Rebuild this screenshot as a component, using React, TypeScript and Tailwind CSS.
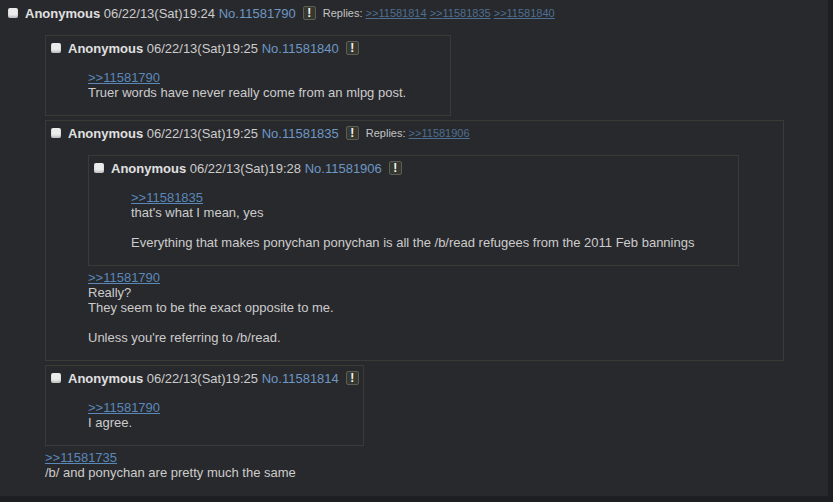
import React from 'react';

type PostHeadProps = {
  time: string;
  no: string;
  replies?: string[];
};

const PostHead: React.FC<PostHeadProps> = ({ time, no, replies }) => (
  <div className="flex items-center h-[18px] whitespace-nowrap">
    <span className="inline-block w-[10px] h-[10px] rounded-[2px] bg-[#ececec] shadow-[inset_0_-2px_2px_rgba(0,0,0,0.18)] mr-[7px] shrink-0" />
    <span className="text-[#cccccc]">
      <b className="text-[#e0e0e0]">Anonymous</b> {time}{' '}
      <span className="text-[#6d97c4]">No.{no}</span>
    </span>
    <span className="ml-[7px] inline-flex items-center justify-center w-[13px] h-[14px] border border-[#5c5d53] bg-[#36372f] rounded-[2px] text-[#f4f4f4] font-bold text-[12px] leading-none">
      !
    </span>
    {replies && (
      <span className="ml-[7px] text-[11px] text-[#c4c4c4]">
        Replies:
        {replies.map((r) => (
          <React.Fragment key={r}>
            {' '}
            <span className="underline text-[#4e6f91]">&gt;&gt;{r}</span>
          </React.Fragment>
        ))}
      </span>
    )}
  </div>
);

const Quote: React.FC<{ to: string }> = ({ to }) => (
  <div className="underline text-[#5a88b9]">&gt;&gt;{to}</div>
);

const Reply: React.FC<PostHeadProps & { children: React.ReactNode }> = ({ children, ...head }) => (
  <div className="w-fit border border-[#3a3b37] bg-[#28292d] pt-[3px] pb-[2px] pl-[5px] pr-1 mb-1">
    <PostHead {...head} />
    <div className="ml-[37px] mr-10 mt-[13px] mb-[13px]">{children}</div>
  </div>
);

export default function App() {
  return (
    <div
      className="w-[833px] h-[502px] bg-[#1e1f22] overflow-hidden text-[13px] leading-[15px] text-[#cccccc]"
      style={{ fontFamily: '"Liberation Sans", Arial, Helvetica, sans-serif' }}
    >
      <div className="w-[828px] bg-[#28292d] pt-1 pb-[3px] pl-2">
        <PostHead
          time="06/22/13(Sat)19:24"
          no="11581790"
          replies={['11581814', '11581835', '11581840']}
        />
        <div className="ml-[37px] mr-10 mt-[13px] mb-[13px]">
          <Reply time="06/22/13(Sat)19:25" no="11581840">
            <Quote to="11581790" />
            <div>Truer words have never really come from an mlpg post.</div>
          </Reply>

          <Reply time="06/22/13(Sat)19:25" no="11581835" replies={['11581906']}>
            <Reply time="06/22/13(Sat)19:28" no="11581906">
              <Quote to="11581835" />
              <div>that's what I mean, yes</div>
              <div className="h-[15px]" />
              <div>Everything that makes ponychan ponychan is all the /b/read refugees from the 2011 Feb bannings</div>
            </Reply>
            <Quote to="11581790" />
            <div>Really?</div>
            <div>They seem to be the exact opposite to me.</div>
            <div className="h-[15px]" />
            <div>Unless you're referring to /b/read.</div>
          </Reply>

          <Reply time="06/22/13(Sat)19:25" no="11581814">
            <Quote to="11581790" />
            <div>I agree.</div>
          </Reply>

          <Quote to="11581735" />
          <div>/b/ and ponychan are pretty much the same</div>
        </div>
      </div>
    </div>
  );
}
